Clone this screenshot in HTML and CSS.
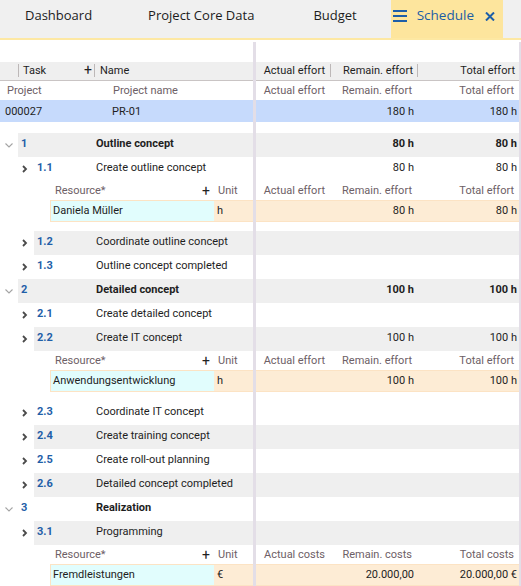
FILE: index.html
```html
<!DOCTYPE html>
<html>
<head>
<meta charset="utf-8">
<link rel="stylesheet" href="styles.css">
</head>
<body>
<nav class="tabs">
  <div class="tab first">Dashboard</div>
  <div class="tab">Project Core Data</div>
  <div class="tab budget">Budget</div>
  <div class="tab active">
    <svg class="menu" width="14" height="12" viewBox="0 0 14 12"><path d="M0 1h14M0 6h14M0 11h14" stroke="#1d5ea8" stroke-width="1.8"/></svg>
    <span class="tab-label">Schedule</span>
    <svg class="close" width="10" height="9" viewBox="0 0 10 9"><path d="M1 0.5l8 8M9 0.5l-8 8" stroke="#1d5ea8" stroke-width="2"/></svg>
  </div>
</nav>

<main class="grid">
  <section class="pane left">
    <div class="gap-top"></div>
    <div class="hdr lhdr">
      <span></span><i class="sep"></i>
      <div class="hc task-h"><span>Task</span><b class="plus">+</b></div><i class="sep"></i>
      <div class="hc name-h">Name</div>
    </div>
    <div class="subhdr lsub"><span class="p-lbl">Project</span><span class="pn-lbl">Project name</span></div>
    <div class="prow lprow"><span class="p-id">000027</span><span class="p-name">PR-01</span></div>
    <div class="gap-mid"></div>

    <div class="trow lvl1 shade"><div class="toggle"><svg width="8" height="5" viewBox="0 0 8 5"><path d="M0.5 0.5l3.5 3.5l3.5-3.5" fill="none" stroke="#a4a4a4" stroke-width="1.1"/></svg></div><div class="tcell"><span class="num">1</span><span class="tname b">Outline concept</span></div></div>
    <div class="trow lvl2"><div class="toggle"><svg width="6" height="8" viewBox="0 0 6 8"><path d="M1 1l3 3l-3 3" fill="none" stroke="#4a4a4a" stroke-width="1.8"/></svg></div><div class="tcell"><span class="num">1.1</span><span class="tname">Create outline concept</span></div></div>
    <div class="rhdr"><div class="res-h"><span>Resource*</span><b class="plus">+</b></div><div class="unit-h">Unit</div></div>
    <div class="rrow"><div class="res-c">Daniela Müller</div><div class="unit-c">h</div></div>
    <div class="gap-res"></div>
    <div class="trow lvl2 shade"><div class="toggle"><svg width="6" height="8" viewBox="0 0 6 8"><path d="M1 1l3 3l-3 3" fill="none" stroke="#4a4a4a" stroke-width="1.8"/></svg></div><div class="tcell"><span class="num">1.2</span><span class="tname">Coordinate outline concept</span></div></div>
    <div class="trow lvl2"><div class="toggle"><svg width="6" height="8" viewBox="0 0 6 8"><path d="M1 1l3 3l-3 3" fill="none" stroke="#4a4a4a" stroke-width="1.8"/></svg></div><div class="tcell"><span class="num">1.3</span><span class="tname">Outline concept completed</span></div></div>
    <div class="trow lvl1 shade"><div class="toggle"><svg width="8" height="5" viewBox="0 0 8 5"><path d="M0.5 0.5l3.5 3.5l3.5-3.5" fill="none" stroke="#a4a4a4" stroke-width="1.1"/></svg></div><div class="tcell"><span class="num">2</span><span class="tname b">Detailed concept</span></div></div>
    <div class="trow lvl2"><div class="toggle"><svg width="6" height="8" viewBox="0 0 6 8"><path d="M1 1l3 3l-3 3" fill="none" stroke="#4a4a4a" stroke-width="1.8"/></svg></div><div class="tcell"><span class="num">2.1</span><span class="tname">Create detailed concept</span></div></div>
    <div class="trow lvl2 shade"><div class="toggle"><svg width="6" height="8" viewBox="0 0 6 8"><path d="M1 1l3 3l-3 3" fill="none" stroke="#4a4a4a" stroke-width="1.8"/></svg></div><div class="tcell"><span class="num">2.2</span><span class="tname">Create IT concept</span></div></div>
    <div class="rhdr"><div class="res-h"><span>Resource*</span><b class="plus">+</b></div><div class="unit-h">Unit</div></div>
    <div class="rrow"><div class="res-c">Anwendungsentwicklung</div><div class="unit-c">h</div></div>
    <div class="gap-res"></div>
    <div class="trow lvl2"><div class="toggle"><svg width="6" height="8" viewBox="0 0 6 8"><path d="M1 1l3 3l-3 3" fill="none" stroke="#4a4a4a" stroke-width="1.8"/></svg></div><div class="tcell"><span class="num">2.3</span><span class="tname">Coordinate IT concept</span></div></div>
    <div class="trow lvl2 shade"><div class="toggle"><svg width="6" height="8" viewBox="0 0 6 8"><path d="M1 1l3 3l-3 3" fill="none" stroke="#4a4a4a" stroke-width="1.8"/></svg></div><div class="tcell"><span class="num">2.4</span><span class="tname">Create training concept</span></div></div>
    <div class="trow lvl2"><div class="toggle"><svg width="6" height="8" viewBox="0 0 6 8"><path d="M1 1l3 3l-3 3" fill="none" stroke="#4a4a4a" stroke-width="1.8"/></svg></div><div class="tcell"><span class="num">2.5</span><span class="tname">Create roll-out planning</span></div></div>
    <div class="trow lvl2 shade"><div class="toggle"><svg width="6" height="8" viewBox="0 0 6 8"><path d="M1 1l3 3l-3 3" fill="none" stroke="#4a4a4a" stroke-width="1.8"/></svg></div><div class="tcell"><span class="num">2.6</span><span class="tname">Detailed concept completed</span></div></div>
    <div class="trow lvl1"><div class="toggle"><svg width="8" height="5" viewBox="0 0 8 5"><path d="M0.5 0.5l3.5 3.5l3.5-3.5" fill="none" stroke="#a4a4a4" stroke-width="1.1"/></svg></div><div class="tcell"><span class="num">3</span><span class="tname b">Realization</span></div></div>
    <div class="trow lvl2 shade"><div class="toggle"><svg width="6" height="8" viewBox="0 0 6 8"><path d="M1 1l3 3l-3 3" fill="none" stroke="#4a4a4a" stroke-width="1.8"/></svg></div><div class="tcell"><span class="num">3.1</span><span class="tname">Programming</span></div></div>
    <div class="rhdr"><div class="res-h"><span>Resource*</span><b class="plus">+</b></div><div class="unit-h">Unit</div></div>
    <div class="rrow"><div class="res-c">Fremdleistungen</div><div class="unit-c">€</div></div>
  </section>

  <div class="splitter"></div>

  <section class="pane right">
    <div class="gap-top"></div>
    <div class="hdr rhdr-top">
      <div class="hc">Actual effort</div><i class="sep"></i>
      <div class="hc">Remain. effort</div><i class="sep"></i>
      <div class="hc">Total effort</div>
    </div>
    <div class="subhdr vals lbls"><span>Actual effort</span><span>Remain. effort</span><span>Total effort</span></div>
    <div class="prow vals"><span></span><span>180 h</span><span>180 h</span></div>
    <div class="gap-mid"></div>

    <div class="vrow vals shade b"><span></span><span>80 h</span><span>80 h</span></div>
    <div class="vrow vals"><span></span><span>80 h</span><span>80 h</span></div>
    <div class="rhdr vals lbls"><span>Actual effort</span><span>Remain. effort</span><span>Total effort</span></div>
    <div class="rrow vals rvals"><span></span><span>80 h</span><span>80 h</span></div>
    <div class="gap-res"></div>
    <div class="vrow vals shade"><span></span><span></span><span></span></div>
    <div class="vrow vals"><span></span><span></span><span></span></div>
    <div class="vrow vals shade b"><span></span><span>100 h</span><span>100 h</span></div>
    <div class="vrow vals"><span></span><span></span><span></span></div>
    <div class="vrow vals shade"><span></span><span>100 h</span><span>100 h</span></div>
    <div class="rhdr vals lbls"><span>Actual effort</span><span>Remain. effort</span><span>Total effort</span></div>
    <div class="rrow vals rvals"><span></span><span>100 h</span><span>100 h</span></div>
    <div class="gap-res"></div>
    <div class="vrow vals"><span></span><span></span><span></span></div>
    <div class="vrow vals shade"><span></span><span></span><span></span></div>
    <div class="vrow vals"><span></span><span></span><span></span></div>
    <div class="vrow vals shade"><span></span><span></span><span></span></div>
    <div class="vrow vals"><span></span><span></span><span></span></div>
    <div class="vrow vals shade"><span></span><span></span><span></span></div>
    <div class="rhdr vals lbls"><span>Actual costs</span><span>Remain. costs</span><span>Total costs</span></div>
    <div class="rrow vals rvals"><span></span><span>20.000,00</span><span>20.000,00 €</span></div>
  </section>

  <div class="scrolltrack"></div>
</main>
</body>
</html>
```

FILE: styles.css
```css
* { box-sizing: border-box; }
html, body { margin: 0; padding: 0; background: #fff; }
body {
  width: 521px;
  height: 586px;
  overflow: hidden;
  font-family: Roboto, "Liberation Sans", sans-serif;
  font-size: 11px;
  color: #1e1e1e;
}

/* ---------- tabs ---------- */
.tabs {
  display: flex;
  height: 40px;
  background: #f0f0f0;
  border-bottom: 2px solid #fde8a3;
  font-family: "Open Sans", "Noto Sans", sans-serif;
  font-size: 13px;
  color: #1c1c1c;
}
.tab {
  display: flex;
  align-items: center;
  padding: 0 28px 8px;
  white-space: nowrap;
}
.tab.first { padding-left: 25px; }
.tab.budget { padding-left: 31px; padding-right: 31px; }
.tab.active {
  background: #fde59d;
  color: #1b5da6;
  padding: 0 8px 6px 2px;
  margin-left: 3px;
  width: 112px;
  font-size: 13.5px;
}
.menu { flex: none; margin-top: 0; }
.tab-label { margin-left: 10px; margin-top: -2px; }
.close { margin-left: auto; margin-top: 0; }

/* ---------- grid ---------- */
.grid {
  display: flex;
  height: 546px;
}
.pane { display: flex; flex-direction: column; }
.pane.left { width: 253px; flex: none; }
.pane.right { flex: 1; }
.splitter { width: 3px; flex: none; background: #e3dee7; margin-top: 2px; }
.scrolltrack { width: 2px; flex: none; background: #e3dee7; margin-top: 2px; }

.gap-top { height: 22px; flex: none; }
.gap-mid { height: 11px; flex: none; }
.gap-res { height: 9px; flex: none; }

.b { font-weight: 700; }
.plus { font-weight: 400; font-size: 14px; color: #222; line-height: 1; }

/* header */
.hdr {
  height: 19px;
  padding-bottom: 2px;
  background: #efefef;
  border-bottom: 1px solid #c9c4c4;
  display: grid;
  align-items: center;
  flex: none;
}
.lhdr { grid-template-columns: 18px 1px 75px 1px 1fr; }
.rhdr-top { grid-template-columns: 74px 1px 86px 1px 1fr; }
.sep { display: block; width: 1px; height: 13px; background: #bdb8b8; }
.hc { white-space: nowrap; }
.task-h { display: flex; justify-content: space-between; align-items: center; padding: 0 2px 0 4px; }
.name-h { padding-left: 5px; }
.rhdr-top .hc { text-align: right; padding-right: 4px; }
.rhdr-top .hc:first-child { padding-right: 5px; }

/* project sub-header and row */
.subhdr { height: 19px; flex: none; color: #6d6066; }
.lsub { display: flex; align-items: center; }
.p-lbl { width: 113px; padding-left: 7px; }
.prow { height: 22px; flex: none; background: #c6dafc; }
.lprow { display: flex; align-items: center; }
.p-id { width: 112px; padding-left: 5px; }

/* value rows (right pane) */
.vals {
  display: grid;
  grid-template-columns: 74px 87px 1fr;
  align-items: center;
  text-align: right;
}
.vals span { padding-right: 3px; white-space: nowrap; }
.vals span:last-child { padding-right: 2px; }
.lbls { color: #6d6066; }
.lbls span { padding-right: 5px; }
.lbls span:last-child { padding-right: 5px; }
.vrow { height: 24px; flex: none; padding-bottom: 3px; }
.shade { background: #efefef; }

/* task rows (left pane) */
.trow { height: 24px; flex: none; display: flex; background: #fff; padding-bottom: 3px; }
.trow.lvl1.shade { background: linear-gradient(#efefef, #efefef) 18px 0 / 100% 100% no-repeat; }
.trow.lvl2.shade { background: linear-gradient(#efefef, #efefef) 34px 0 / 100% 100% no-repeat; }
.trow.lvl2 { padding-left: 16px; }
.toggle { width: 18px; flex: none; display: flex; align-items: center; justify-content: center; padding-top: 3px; }
.lvl2 .toggle { padding-right: 1px; }
.tcell { flex: 1; display: flex; align-items: center; white-space: nowrap; }
.num { color: #1f5fa8; font-weight: 700; padding-left: 3px; flex: none; }
.lvl1 .num { width: 78px; }
.lvl2 .num { width: 62px; }

/* resource rows */
.rhdr { height: 19px; flex: none; }
.pane.left .rhdr {
  display: grid;
  grid-template-columns: 163px 1fr;
  align-items: center;
  margin-left: 50px;
  color: #6d6066;
}
.res-h { display: flex; justify-content: space-between; align-items: center; padding: 0 3px 0 5px; }
.unit-h { padding-left: 5px; }
.rrow { height: 22px; flex: none; background: #fdecd5; border-top: 1px solid #fce3c4; border-bottom: 1px solid #fce3c4; padding-bottom: 1px; }
.pane.left .rrow {
  display: grid;
  grid-template-columns: 163px 1fr;
  align-items: stretch;
  margin-left: 50px;
  border-left: 1px solid #fce3c4;
  padding-bottom: 0;
}
.res-c { background: #e1fdfd; padding: 0 0 1px 2px; display: flex; align-items: center; }
.unit-c { padding: 0 0 1px 3px; display: flex; align-items: center; }
```
